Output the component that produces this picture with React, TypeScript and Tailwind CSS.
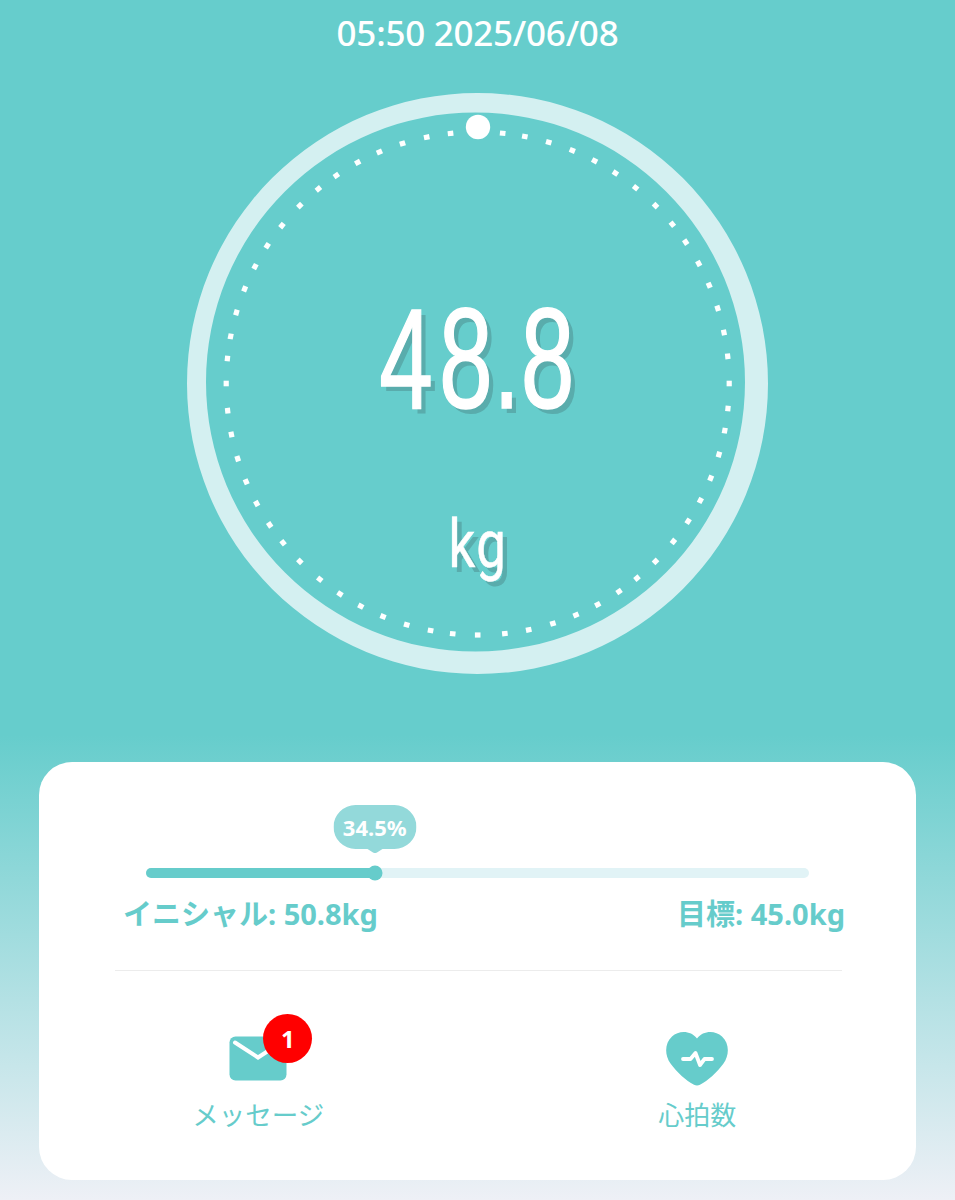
import React from "react";

const TICK_RADIUS = 251.5;

// tick angles inside one quarter of the dial, repeated four times
const QUARTER = [5.7, 10.8, 16.4, 22.1, 27.7, 33.2, 38.9, 45, 50.7, 55.8, 61.5, 67, 72.6, 78.3, 83.8, 90];

const ticks = [0, 90, 180, 270]
  .flatMap((start) => QUARTER.map((a) => start + a))
  .filter((a) => a < 360);

const WeightDial: React.FC = () => (
  <div className="relative w-[582px] h-[582px]">
    <svg viewBox="0 0 582 582" className="w-full h-full">
      <path
        fillRule="evenodd"
        fill="#d4f0f1"
        d="M290.5 0a290.5 290.5 0 1 1 0 581a290.5 290.5 0 1 1 0-581ZM288.5 19.5a269.5 269.5 0 1 0 0 539a269.5 269.5 0 1 0 0-539Z"
      />
      {ticks.map((angle) => (
        <rect
          key={angle}
          x={287.9}
          y={290.5 - TICK_RADIUS - 2.6}
          width={5.6}
          height={5.2}
          fill="#fff"
          transform={`rotate(${angle} 290.7 290.5)`}
        />
      ))}
      <circle cx="291" cy="34" r="12.2" fill="#fff" />
    </svg>
    {/* Reading */}
    <div className="absolute inset-0 flex flex-col items-center text-white">
      <span className="mt-[194px] h-[144px] leading-[144px] text-[142px] tracking-[1px] scale-x-[0.68] font-['Liberation_Sans'] [-webkit-text-stroke:1.5px_#fff] [text-shadow:7px_5px_0_#59acac]">
        <span className="tracking-[9px]">4</span>8.8
      </span>
      <span className="mt-[72px] h-[84px] leading-[84px] text-[66px] tracking-[2px] scale-x-[0.8] font-['Roboto'] [-webkit-text-stroke:0.5px_#fff] [text-shadow:6px_5px_0_#59acac]">
        kg
      </span>
    </div>
  </div>
);

const GoalProgress: React.FC<{ percent: number }> = ({ percent }) => (
  <div className="relative mx-[107px] mt-[106px] h-[10px] rounded-full bg-[#e1f3f6]">
    <div className="h-full rounded-full bg-[#66cccb]" style={{ width: `${percent}%` }} />
    <div
      className="absolute top-1/2 w-[15px] h-[15px] -translate-x-1/2 -translate-y-1/2 rounded-full bg-[#66cccb]"
      style={{ left: `${percent}%` }}
    />
    <div
      className="absolute -top-[63px] -translate-x-1/2 w-[83px] h-[48px]"
      style={{ left: `${percent}%` }}
    >
      <svg viewBox="0 0 83 48" className="absolute inset-0">
        <path
          d="M22 0H61A22 22 0 0 1 61 44H49L43.5 47.6Q41.5 48.6 39.5 47.6L34 44H22A22 22 0 0 1 22 0Z"
          fill="#93d9da"
        />
      </svg>
      <span className="relative flex justify-center leading-[44px] text-[22px] font-bold text-white whitespace-nowrap">
        {percent}%
      </span>
    </div>
  </div>
);

const MailIcon = () => (
  <svg width="58" height="45" viewBox="0 0 58 45">
    <rect x=".5" y=".5" width="57" height="44" rx="6" fill="#66cccb" />
    <path d="M6 6.5L29 21.5L52 6.5" fill="none" stroke="#fff" strokeWidth="4" strokeLinecap="round" />
  </svg>
);

const HeartRateIcon = () => (
  <svg width="62" height="54" viewBox="0 0 62 54">
    <path
      d="M31 6.500C25 -1.500 13 -2 6 4.500C-1.500 11.500 -1.500 23 4.500 31.500C11 40.500 20 48.500 28 52.800Q31 54.400 34 52.800C42 48.500 51 40.500 57.500 31.500C63.500 23 63.500 11.500 56 4.500C49 -2 37 -1.500 31 6.500Z"
      fill="#66cccb"
    />
    <path
      d="M17 27H24.500L29.500 21L34 33L38.500 27H46"
      fill="none"
      stroke="#fff"
      strokeWidth="3.8"
      strokeLinecap="round"
      strokeLinejoin="round"
    />
  </svg>
);

const App: React.FC = () => {
  return (
    <div className="w-[955px] h-[1200px] overflow-hidden flex flex-col items-center bg-[linear-gradient(to_bottom,#66cdcc_0px,#66cdcc_735px,#eef0f6_1200px)] font-['Noto_Sans','Noto_Sans_CJK_JP',sans-serif]">
      <time className="mt-[9px] h-[48px] leading-[48px] text-[35px] font-medium tracking-[-0.25px] text-white whitespace-nowrap">
        05:50 2025/06/08
      </time>

      <div className="mt-[36px]">
        <WeightDial />
      </div>

      <div className="mt-[87px] w-[877px] h-[418px] rounded-[33px] bg-white text-[#66cccb] flex flex-col">
        <GoalProgress percent={34.5} />

        <div className="mt-[14px] ml-[84px] mr-[71px] flex justify-between h-[44px] leading-[44px] text-[29px] font-bold whitespace-nowrap">
          <span>イニシャル: 50.8kg</span>
          <span>目標: 45.0kg</span>
        </div>

        <div className="mt-[34px] ml-[76px] mr-[74px] h-px bg-[#ececec]" />

        {/* Shortcuts */}
        <div className="grid grid-cols-2">
          <div className="flex flex-col items-center pt-[65px]">
            <div className="relative">
              <MailIcon />
              <span className="absolute -top-[22px] left-[34px] w-[49px] h-[49px] rounded-full bg-[#ff0000] text-white text-[24px] font-bold flex items-center justify-center">
                1
              </span>
            </div>
            <span className="mt-[14px] leading-[40px] text-[26.5px]">メッセージ</span>
          </div>
          <div className="flex flex-col items-center pt-[60.5px]">
            <HeartRateIcon />
            <span className="mt-[9px] ml-px leading-[40px] text-[26px]">心拍数</span>
          </div>
        </div>
      </div>
    </div>
  );
};

export default App;
